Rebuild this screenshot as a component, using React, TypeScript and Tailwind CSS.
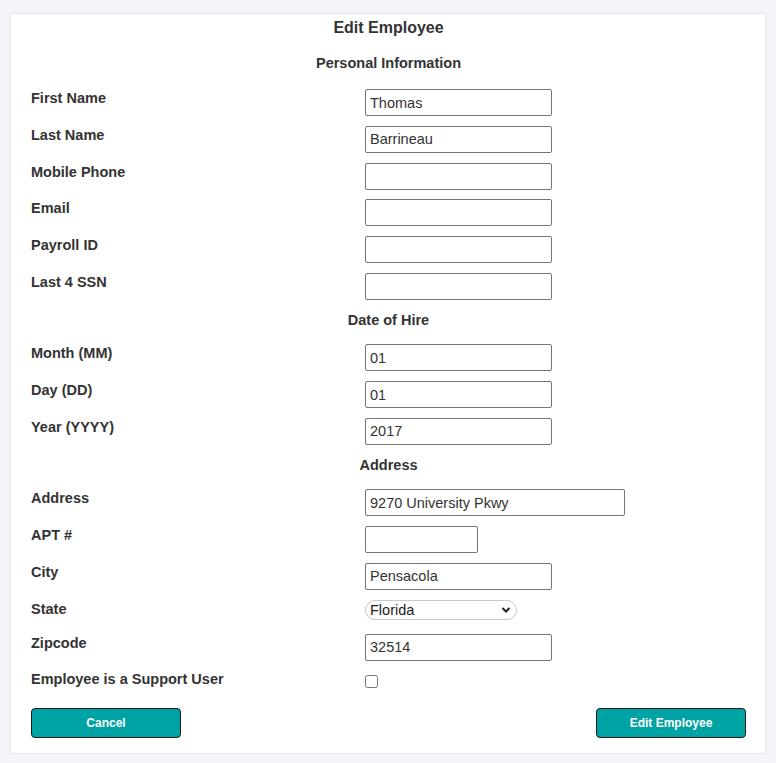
import React from "react";

const font = { fontFamily: '"Liberation Sans", Arial, sans-serif' };

type Field = { label: string; value?: string; width?: string };

const personal: Field[] = [
  { label: "First Name", value: "Thomas" },
  { label: "Last Name", value: "Barrineau" },
  { label: "Mobile Phone" },
  { label: "Email" },
  { label: "Payroll ID" },
  { label: "Last 4 SSN" },
];

const hire: Field[] = [
  { label: "Month (MM)", value: "01" },
  { label: "Day (DD)", value: "01" },
  { label: "Year (YYYY)", value: "2017" },
];

function Row({ label, children, className = "" }: { label: string; children: React.ReactNode; className?: string }) {
  return (
    <div className={`flex items-start ${className}`}>
      <label className="w-[334px] shrink-0 text-[14.5px] leading-[18px] font-bold text-[#333]">{label}</label>
      <div className="flex-1">{children}</div>
    </div>
  );
}

function TextInput({ value = "", width = "w-[187px]" }: { value?: string; width?: string }) {
  return (
    <input
      type="text"
      defaultValue={value}
      className={`${width} h-[27px] border border-[#767676] rounded-[2px] px-[4px] text-[14.5px] text-[#333] bg-white outline-none`}
      style={font}
    />
  );
}

function Heading({ children }: { children: React.ReactNode }) {
  return <div className="text-center text-[14.5px] leading-[20px] font-bold text-[#333] mb-[14.5px]">{children}</div>;
}

export default function App() {
  return (
    <div className="min-h-screen bg-[#f3f4f8] px-[10px] pt-[13px] pb-[10px]" style={font}>
      <div className="bg-white border border-[#e6e8ec] pl-[20px] pr-[19px] pt-[1px] pb-[15px]">
        <h1 className="text-center text-[16px] leading-[26px] font-bold text-[#333]">Edit Employee</h1>
        <div className="mt-[12px] mb-[16px] text-center text-[14.5px] leading-[20px] font-bold text-[#333]">
          Personal Information
        </div>

        {personal.map((f) => (
          <Row key={f.label} label={f.label} className="mb-[9.8px]">
            <TextInput value={f.value} />
          </Row>
        ))}

        <Heading>Date of Hire</Heading>
        {hire.map((f) => (
          <Row key={f.label} label={f.label} className="mb-[9.8px]">
            <TextInput value={f.value} />
          </Row>
        ))}

        <Heading>Address</Heading>
        <Row label="Address" className="mb-[9.8px]">
          <TextInput value="9270 University Pkwy" width="w-[260px]" />
        </Row>
        <Row label="APT #" className="mb-[9.8px]">
          <TextInput width="w-[113px]" />
        </Row>
        <Row label="City" className="mb-[9.8px]">
          <TextInput value="Pensacola" />
        </Row>
        <Row label="State" className="mb-[14px]">
          <div className="relative w-[152px] h-[20px]">
            <select
              defaultValue="Florida"
              className="block appearance-none w-full h-full border border-[#c8c8c8] rounded-[10px] pl-[4px] text-[14.5px] leading-[18px] text-[#222] bg-white outline-none"
              style={font}
            >
              <option>Florida</option>
              <option>Georgia</option>
              <option>Alabama</option>
            </select>
            <svg className="absolute right-[6px] top-[6px] pointer-events-none" width="10" height="8" viewBox="0 0 10 8">
              <path d="M1.5 2 L5 5.5 L8.5 2" fill="none" stroke="#222" strokeWidth="2" />
            </svg>
          </div>
        </Row>
        <Row label="Zipcode" className="mb-[9.8px]">
          <TextInput value="32514" />
        </Row>
        <Row label="Employee is a Support User" className="mb-[10.5px] h-[27px]">
          <input type="checkbox" className="block w-[13px] h-[13px] mt-[5px]" />
        </Row>

        <div className="flex justify-between">
          <button
            className="w-[150px] h-[30px] bg-[#00a3a3] border border-[#1a1a1a] rounded-[4px] text-white text-[12px] font-bold"
            style={{ fontFamily: '"Liberation Sans Narrow", "Liberation Sans", Arial, sans-serif' }}
          >
            Cancel
          </button>
          <button
            className="w-[150px] h-[30px] bg-[#00a3a3] border border-[#1a1a1a] rounded-[4px] text-white text-[12px] font-bold"
            style={{ fontFamily: '"Liberation Sans Narrow", "Liberation Sans", Arial, sans-serif' }}
          >
            Edit Employee
          </button>
        </div>
      </div>
    </div>
  );
}
